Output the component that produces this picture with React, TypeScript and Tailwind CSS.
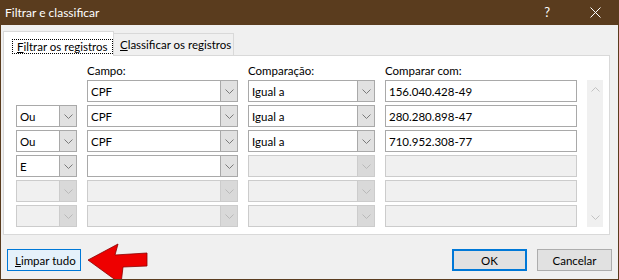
import React from "react";

function Chevron({ disabled }: { disabled?: boolean }) {
  return (
    <svg width="9" height="5" viewBox="0 0 9 5">
      <polyline points="0.5,0.5 4.5,4.5 8.5,0.5" fill="none" stroke={disabled ? "#b9b9b9" : "#7a7a7a"} strokeWidth="1" />
    </svg>
  );
}

function Combo({ text, disabled }: { text?: string; disabled?: boolean }) {
  return (
    <div className={`flex h-[22px] border ${disabled ? "border-[#cccccc] bg-[#f0f0f0]" : "border-[#a9a9a9] bg-white"}`}>
      <div className="flex flex-1 items-center whitespace-nowrap pl-[3px] text-black">{text}</div>
      <div className={`flex w-[17px] items-center justify-center border-l ${disabled ? "border-[#cccccc] bg-[#d9d9d9]" : "border-[#a9a9a9] bg-[#e1e1e1]"}`}>
        <Chevron disabled={disabled} />
      </div>
    </div>
  );
}

function Input({ text, disabled }: { text?: string; disabled?: boolean }) {
  return (
    <div className={`flex h-[22px] items-center whitespace-nowrap border pl-[3px] text-black ${disabled ? "border-[#cccccc] bg-[#f0f0f0]" : "border-[#a9a9a9] bg-white"}`}>
      {text}
    </div>
  );
}

type Row = { op?: string | null; opDis?: boolean; campo?: string; campoDis?: boolean; comp?: string; compDis?: boolean; val?: string; valDis?: boolean };

const rows: Row[] = [
  { op: null, campo: "CPF", comp: "Igual a", val: "156.040.428-49" },
  { op: "Ou", campo: "CPF", comp: "Igual a", val: "280.280.898-47" },
  { op: "Ou", campo: "CPF", comp: "Igual a", val: "710.952.308-77" },
  { op: "E", campo: "", comp: "", compDis: true, val: "", valDis: true },
  { op: "", opDis: true, campo: "", campoDis: true, comp: "", compDis: true, val: "", valDis: true },
  { op: "", opDis: true, campo: "", campoDis: true, comp: "", compDis: true, val: "", valDis: true },
];

export default function App() {
  return (
    <div className="relative flex h-[280px] w-[619px] flex-col overflow-hidden whitespace-nowrap border-x border-b border-[#5a3c1e] bg-[#f0f0f0] font-['Lato',sans-serif] text-[11.5px] leading-[15px] text-black">
      {/* Title bar */}
      <div className="flex h-[25px] shrink-0 items-center bg-[#5a3c1e] pl-[4px] text-white">
        <span className="text-[12px]">Filtrar e classificar</span>
        <span className="ml-auto mr-[40px] text-[13px]">?</span>
        <svg width="11" height="11" viewBox="0 0 11 11" className="mr-[17px]">
          <path d="M0.5 0.5 L10.5 10.5 M10.5 0.5 L0.5 10.5" stroke="#ffffff" strokeWidth="1" />
        </svg>
      </div>

      {/* Tabs */}
      <div className="ml-[2px] mt-[6px] flex items-end">
        <div className="relative z-10 -mb-px flex h-[25px] w-[111px] items-start border border-b-0 border-[#d9d9d9] bg-white pl-[8px] pt-[7px]">
          <span className="border border-dotted border-black px-[4px] leading-[13px]">
            <span className="underline">F</span>iltrar os registros
          </span>
        </div>
        <div className="flex h-[22px] w-[120px] items-center border border-b-0 border-l-0 border-[#d9d9d9] bg-[#f0f0f0] pl-[6px]">
          <span>
            <span className="underline">C</span>lassificar os registros
          </span>
        </div>
      </div>

      {/* Panel */}
      <div className="ml-[2px] flex h-[180px] w-[607px] flex-col border border-[#d9d9d9] bg-white pl-[12px] pt-[7px]">
        <div className="flex h-[14px] items-center">
          <div className="ml-[71px] w-[161px]">Campo:</div>
          <div className="w-[137px]">Comparação:</div>
          <div>Comparar com:</div>
        </div>
        <div className="mt-[3px] flex">
          <div className="grid grid-cols-[61px_151px_127px_192px] gap-x-[10px] gap-y-[3px]">
            {rows.map((r, i) => (
              <React.Fragment key={i}>
                {r.op === null ? <div /> : <Combo text={r.op} disabled={r.opDis} />}
                <Combo text={r.campo} disabled={r.campoDis} />
                <Combo text={r.comp} disabled={r.compDis} />
                <Input text={r.val} disabled={r.valDis} />
              </React.Fragment>
            ))}
          </div>
          <div className="ml-[10px] flex h-[147px] w-[16px] flex-col items-center justify-between bg-[#f0f0f0] py-[7px]">
            <svg width="9" height="5" viewBox="0 0 9 5">
              <polyline points="0.5,4.5 4.5,0.5 8.5,4.5" fill="none" stroke="#c2c2c2" strokeWidth="1" />
            </svg>
            <svg width="9" height="5" viewBox="0 0 9 5">
              <polyline points="0.5,0.5 4.5,4.5 8.5,0.5" fill="none" stroke="#c2c2c2" strokeWidth="1" />
            </svg>
          </div>
        </div>
      </div>

      {/* Buttons */}
      <div className="mt-[14px] flex px-[6px]">
        <div className="flex h-[22px] w-[74px] items-center border border-[#0078d7] bg-[#e5f1fb] pl-[7px]">
          <span>
            <span className="underline">L</span>impar tudo
          </span>
        </div>
        <div className="ml-auto flex h-[22px] w-[75px] items-center justify-center border-2 border-[#0078d7] bg-[#e1e1e1]">OK</div>
        <div className="ml-[10px] flex h-[22px] w-[75px] items-center justify-center border border-[#adadad] bg-[#e1e1e1]">Cancelar</div>
      </div>

      {/* Red annotation arrow */}
      <svg className="absolute left-0 top-0" width="619" height="280" viewBox="0 0 619 280">
        <polygon
          points="87,260 117,244 114,255 146,253 146,266 122,267 120,284"
          fill="#ee0000"
          stroke="#8a0000"
          strokeWidth="0.8"
          strokeLinejoin="round"
        />
      </svg>
    </div>
  );
}
